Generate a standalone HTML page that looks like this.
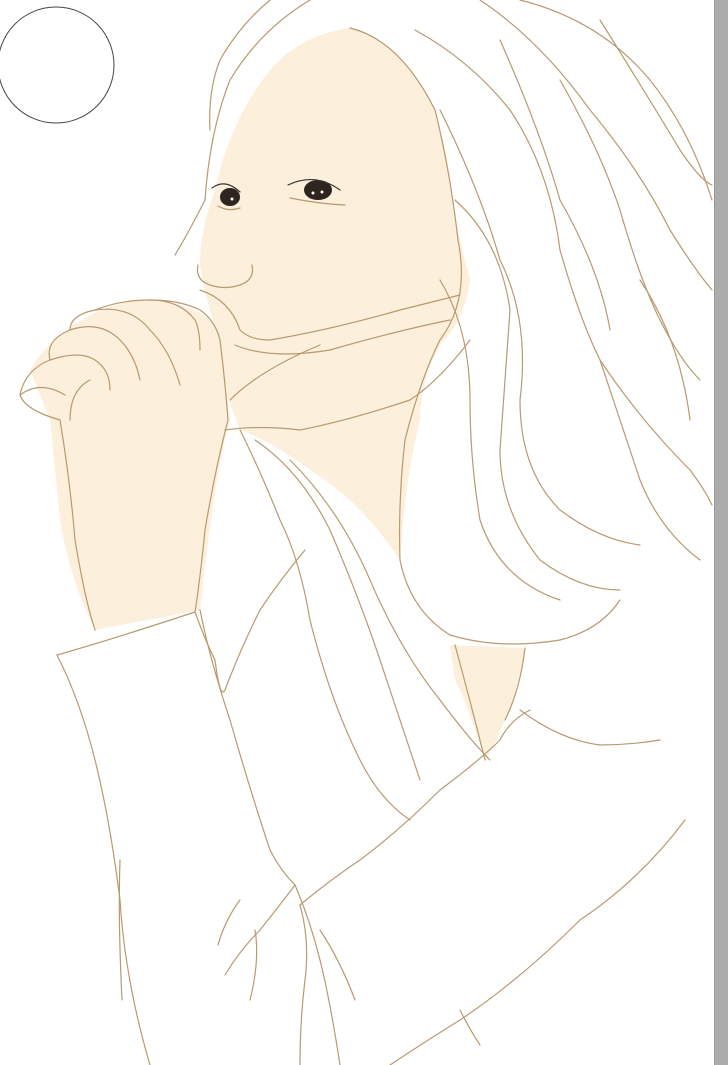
<!DOCTYPE html>
<html><head><meta charset="utf-8"><style>
html,body{margin:0;padding:0;background:#fff;width:728px;height:1065px;overflow:hidden}
svg{display:block}
</style></head><body>
<svg width="728" height="1065" viewBox="0 0 728 1065" xmlns="http://www.w3.org/2000/svg">
<rect width="728" height="1065" fill="#fff"/>
<rect x="714" y="0" width="14" height="1065" fill="#acacac"/>
<line x1="714.5" y1="0" x2="714.5" y2="1065" stroke="#999" stroke-width="1"/>
<circle cx="56" cy="65" r="58" fill="none" stroke="#444" stroke-width="1"/>
<!-- skin fills -->
<g fill="#fcefdc">
<path d="M270 70 Q300 35 350 28 Q400 40 435 110 Q450 160 455 220 L470 280 Q465 320 440 345 Q420 380 420 420 Q405 480 400 560 Q360 500 310 470 Q270 440 240 430 L225 390 L220 340 Q205 300 200 265 Q200 230 215 190 Q230 120 270 70Z"/>
<path d="M50 420 L30 370 Q60 320 130 300 Q200 300 220 330 L230 420 Q215 470 200 610 L95 630 Q70 580 60 520Z"/>
<path d="M450 645 L525 648 Q515 700 505 720 Q495 745 485 760 Q470 710 455 680Z"/>
</g>
<!-- eyes -->
<g fill="#2e2520">
<ellipse cx="230" cy="197" rx="10" ry="9"/>
<ellipse cx="318" cy="190" rx="14" ry="10"/>
</g>
<g fill="#fff"><circle cx="232" cy="199" r="1.5"/><circle cx="313" cy="193" r="1.5"/><circle cx="322" cy="192" r="1.5"/></g>
<g fill="none" stroke="#b89a70" stroke-width="1.2" stroke-linecap="round">
<!-- eye lashes -->
<path d="M288 185 Q315 172 340 190" stroke="#333"/>
<path d="M212 188 Q225 178 240 192" stroke="#333"/>
<path d="M290 198 Q320 204 345 205"/>
<path d="M218 206 Q228 212 240 208"/>
<!-- hair outline -->
<path d="M310 0 Q260 30 230 80 Q210 130 205 200 Q190 230 175 255"/>
<path d="M270 0 Q240 25 220 60 Q208 90 210 130"/>
<path d="M350 28 Q400 40 435 110 Q450 170 458 240 Q470 300 440 340 Q420 380 405 440 Q398 500 400 560 Q410 610 450 635 Q500 650 560 640 Q600 630 620 600"/>
<path d="M415 30 Q470 60 510 110 Q550 170 560 250 Q580 320 600 360 Q640 420 690 470 Q705 490 712 505"/>
<path d="M480 0 Q540 40 590 110 Q640 170 670 230 Q695 270 712 290"/>
<path d="M520 0 Q600 20 650 80 Q690 130 712 200"/>
<path d="M500 40 Q540 130 560 200 Q600 270 610 330"/>
<path d="M440 110 Q480 190 500 260 Q530 320 520 400 Q520 470 560 510 Q600 540 640 545"/>
<path d="M455 200 Q500 240 510 310 Q505 380 500 450 Q500 510 540 560 Q580 590 620 590"/>
<path d="M600 360 Q620 420 640 480 Q660 530 700 560"/>
<path d="M440 280 Q470 330 470 400 Q470 460 480 520 Q500 580 560 600"/>
<path d="M600 20 Q650 100 680 150 Q700 180 712 185"/>
<path d="M560 80 Q600 150 620 210 Q640 280 660 320 Q680 360 700 380"/>
<path d="M640 280 Q680 340 690 420"/>
<path d="M240 430 Q260 470 280 520 Q300 560 310 620 Q330 700 360 760 Q380 800 410 820"/>
<path d="M255 440 Q300 470 330 530 Q360 600 380 660 Q400 720 420 780"/>
<path d="M290 460 Q340 510 370 580 Q400 650 440 700 Q470 740 490 760"/>
<!-- face -->
<path d="M198 265 Q195 280 210 285 Q225 290 240 285 Q255 280 252 265"/>
<path d="M200 290 Q230 300 240 330 Q250 340 270 340 Q330 330 400 310 Q440 300 460 295"/>
<path d="M235 345 Q270 360 330 350 Q400 330 450 320"/>
<path d="M225 430 Q260 425 300 430 Q350 420 410 400 Q440 380 470 340"/>
<path d="M230 400 Q260 370 320 345"/>
<!-- hand -->
<path d="M60 420 Q25 410 20 395 Q25 370 50 360 Q45 340 70 330 Q70 315 95 310 Q120 300 150 300 Q180 300 200 310 Q215 320 220 340 Q225 380 228 420 Q215 470 205 530 Q200 580 195 612"/>
<path d="M60 420 Q70 480 75 540 Q85 600 95 630"/>
<path d="M50 360 Q80 350 95 360 Q110 370 110 390"/>
<path d="M70 330 Q100 320 120 340 Q135 355 140 380"/>
<path d="M95 310 Q130 305 150 330 Q170 350 180 385"/>
<path d="M150 300 Q180 300 195 320 Q200 330 200 350"/>
<path d="M20 395 Q40 380 65 395"/>
<path d="M90 380 Q70 390 70 420"/>
<!-- sleeve -->
<path d="M57 655 Q110 640 195 612 Q205 640 215 660"/>
<path d="M57 655 Q80 700 95 760 Q110 820 120 900 Q125 980 150 1065"/>
<path d="M200 610 Q210 660 230 720 Q250 790 270 850 Q280 870 295 885"/>
<path d="M215 660 Q220 700 225 690 Q240 650 260 610 Q280 580 305 550"/>
<path d="M295 885 Q280 905 260 930 Q240 950 225 975"/>
<path d="M300 905 Q330 880 360 860 Q400 830 440 790 Q480 760 500 740 Q510 720 530 710"/>
<path d="M295 885 Q310 920 320 960 Q330 1000 340 1065"/>
<path d="M320 930 Q340 960 355 1000"/>
<path d="M300 905 Q310 940 305 980 Q300 1020 300 1065"/>
<path d="M520 710 Q560 740 600 745 Q630 745 660 740"/>
<path d="M685 820 Q640 880 580 920 Q520 980 460 1020 Q420 1045 390 1065"/>
<path d="M120 860 Q118 920 122 1000"/>
<path d="M460 1010 Q470 1030 480 1045"/>
<path d="M255 930 Q260 960 250 1000"/>
<path d="M240 900 Q225 920 218 945"/>
<path d="M455 645 Q470 700 485 760"/>
<path d="M525 648 Q520 690 505 720"/>
</g>
</svg>
</body></html>
